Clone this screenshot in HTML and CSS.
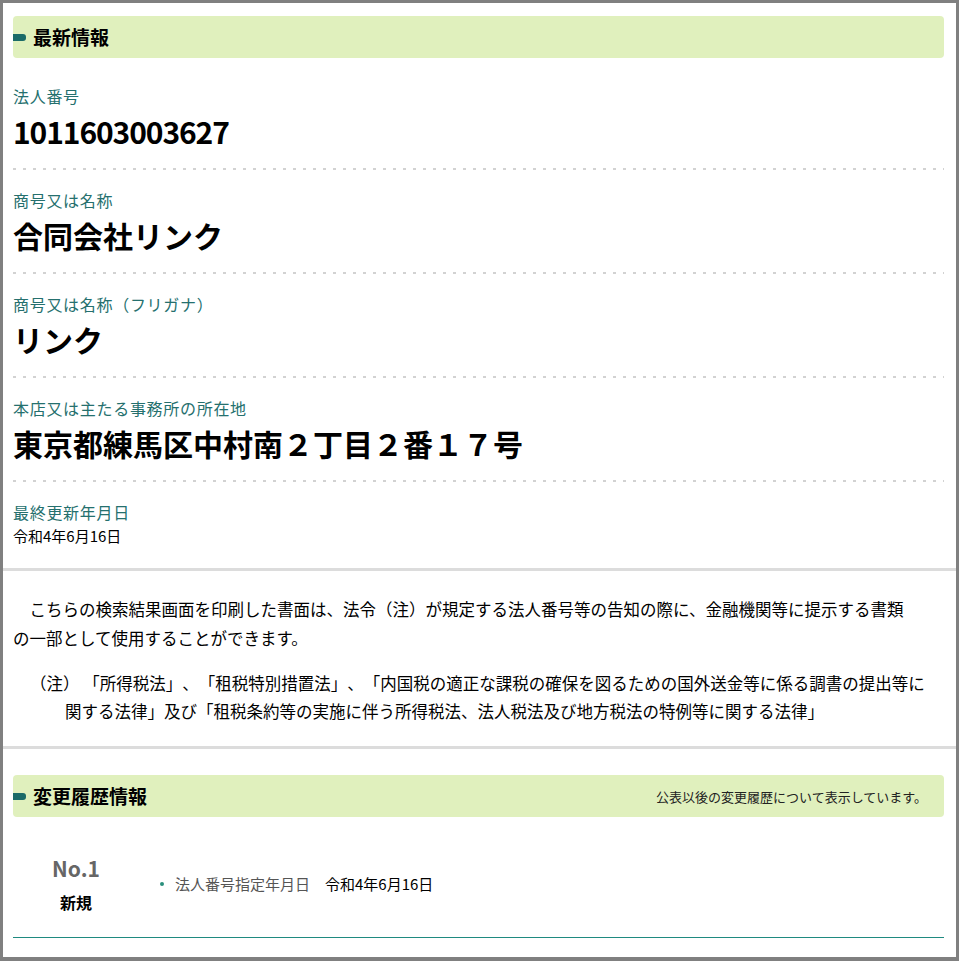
FILE: index.html
```html
<!DOCTYPE html>
<html lang="ja">
<head>
    <meta charset="UTF-8">
    <meta name="viewport" content="width=device-width, initial-scale=1.0">
    <title>法人番号 検索結果</title>
    <link rel="stylesheet" href="styles.css">
</head>
<body>
    <div class="frame">
        <section class="basic">
            <div class="sec-head">
                <h2><span class="mark"></span>最新情報</h2>
            </div>
            <dl class="fields">
                <div class="field">
                    <dt>法人番号</dt>
                    <dd class="big num">1011603003627</dd>
                </div>
                <div class="field">
                    <dt>商号又は名称</dt>
                    <dd class="big">合同会社リンク</dd>
                </div>
                <div class="field">
                    <dt>商号又は名称（フリガナ）</dt>
                    <dd class="big">リンク</dd>
                </div>
                <div class="field">
                    <dt>本店又は主たる事務所の所在地</dt>
                    <dd class="big">東京都練馬区中村南２丁目２番１７号</dd>
                </div>
                <div class="field last">
                    <dt>最終更新年月日</dt>
                    <dd class="small">令和4年6月16日</dd>
                </div>
            </dl>
        </section>

        <section class="notice">
            <p class="lead">こちらの検索結果画面を印刷した書面は、法令（注）が規定する法人番号等の告知の際に、金融機関等に提示する書類の一部として使用することができます。</p>
            <p class="note">（注） 「所得税法」、「租税特別措置法」、「内国税の適正な課税の確保を図るための国外送金等に係る調書の提出等に関する法律」及び「租税条約等の実施に伴う所得税法、法人税法及び地方税法の特例等に関する法律」</p>
        </section>

        <section class="history">
            <div class="sec-head">
                <h2><span class="mark"></span>変更履歴情報</h2>
                <span class="aside">公表以後の変更履歴について表示しています。</span>
            </div>
            <div class="hist-row">
                <div class="hist-no">
                    <span class="no">No.1</span>
                    <span class="kind">新規</span>
                </div>
                <ul class="hist-list">
                    <li><span class="key">法人番号指定年月日</span><span class="val">令和4年6月16日</span></li>
                </ul>
            </div>
        </section>
    </div>
</body>
</html>
```

FILE: styles.css
```css
body, html {
    margin: 0;
    padding: 0;
    background-color: #fff;
    color: #000;
    font-family: "Noto Sans CJK JP", "Noto Sans", sans-serif;
    text-spacing-trim: space-all;
}

.frame {
    box-sizing: border-box;
    height: 961px;
    border: 3px solid #808080;
    border-bottom-width: 4px;
    overflow: hidden;
}

/* section headings */
.sec-head {
    display: flex;
    align-items: center;
    justify-content: space-between;
    height: 42px;
    background-color: #e0f0bd;
    border-radius: 4px;
}

.sec-head h2 {
    display: flex;
    align-items: center;
    margin: 0;
    font-size: 19px;
    font-weight: bold;
    line-height: 24px;
}

.mark {
    display: inline-block;
    width: 13px;
    height: 7px;
    margin-right: 7px;
    background-color: #1b6b68;
    border-radius: 0 3px 3px 0;
}

.aside {
    font-size: 13px;
    color: #222;
    padding-right: 17px;
}

/* latest info */
.basic {
    padding: 13px 12px 0 10px;
}

.basic .sec-head {
    margin-bottom: 8px;
}

.fields {
    margin: 0;
}

.field {
    padding: 20px 0 21px;
    background-image: linear-gradient(to right, #d2d2d2 3px, transparent 3px);
    background-size: 10px 2px;
    background-repeat: repeat-x;
    background-position: left bottom;
}

.field dt {
    font-size: 16px;
    letter-spacing: 0.7px;
    line-height: 20px;
    color: #25706e;
}

.field dd {
    margin: 0;
}

.field .big {
    margin-top: 7px;
    font-size: 30px;
    font-weight: bold;
    line-height: 36px;
}

.field .num {
    letter-spacing: -1.1px;
}

.field.last {
    padding-bottom: 22px;
    background: none;
}

.field .small {
    margin-top: 4px;
    font-size: 15px;
    line-height: 20px;
}

/* notice */
.notice {
    padding: 24px 12px 21px 10px;
    border-top: 3px solid #dcdcdc;
    border-bottom: 3px solid #dcdcdc;
    font-size: 16.5px;
}

.notice p {
    margin: 0;
}

.lead {
    line-height: 29px;
    text-indent: 1em;
    margin-right: 31px !important;
}

.note {
    margin-top: 16px !important;
    margin-right: 8px !important;
    line-height: 28px;
    padding-left: 52px;
    text-indent: -35px;
}

/* history */
.history {
    padding: 26px 12px 0 10px;
}

.hist-row {
    display: flex;
    align-items: center;
    padding: 36px 0 23px;
    border-bottom: 1px solid #1f8a80;
}

.hist-no {
    display: flex;
    flex-direction: column;
    align-items: center;
    width: 126px;
}

.no {
    font-size: 21px;
    font-weight: bold;
    line-height: 30px;
    color: #666;
}

.kind {
    margin-top: 7px;
    font-size: 16px;
    font-weight: bold;
    line-height: 24px;
}

.hist-list {
    list-style: none;
    margin: 0;
    padding: 0;
}

.hist-list li {
    position: relative;
    padding-left: 36px;
    font-size: 15px;
    line-height: 22px;
}

.hist-list li::before {
    content: "";
    position: absolute;
    left: 21px;
    top: 9px;
    width: 4px;
    height: 4px;
    border-radius: 50%;
    background-color: #2a8f7c;
}

.key {
    color: #555;
}

.val {
    margin-left: 15px;
}
```
